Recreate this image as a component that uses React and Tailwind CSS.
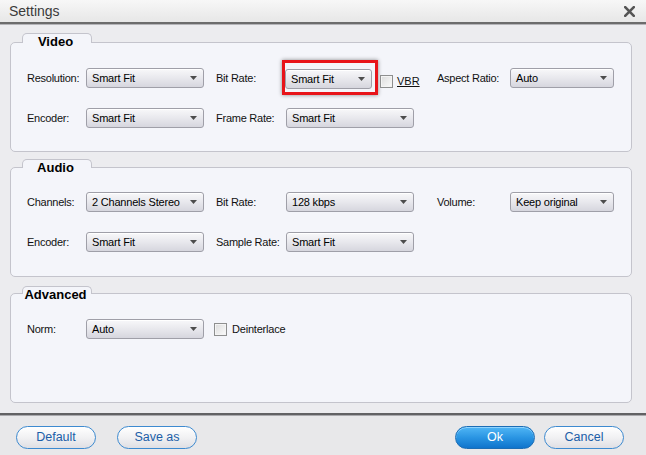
import React from "react";

const FONT = "font-['Liberation_Sans',Arial,sans-serif]";

function Select({ w, value }) {
  return (
    <div
      className={`${w} h-[20px] shrink-0 rounded-[3px] border border-[#9f9fa8] bg-linear-to-b from-[#f8f8fa] via-[#e8e8ed] to-[#d6d6de] flex items-center justify-between pl-[5px] pr-[6px] text-[11px] text-black shadow-[inset_0_1px_0_#ffffff]`}
    >
      <span className="leading-none tracking-[-0.2px]">{value}</span>
      <svg width="7" height="4" viewBox="0 0 7 4">
        <path d="M0 0H7L3.5 4Z" fill="#4d4d4d" />
      </svg>
    </div>
  );
}

function Check() {
  return (
    <div className="w-[13px] h-[13px] shrink-0 border border-[#8e8f8f] bg-linear-to-br from-[#dcdcdc] to-[#fbfbfb] shadow-[inset_0_0_0_1px_#f4f4f4]" />
  );
}

function Label({ w, children }) {
  return (
    <div className={`${w} shrink-0 text-[11px] leading-none tracking-[-0.25px] text-[#111]`}>
      {children}
    </div>
  );
}

function Group({ title, tabH, children, boxClass }) {
  return (
    <div className="flex flex-col ml-[10px] w-[622px]">
      <div
        className={`relative z-10 ml-[12px] w-[70px] ${tabH} -mb-px rounded-t-[5px] border border-b-0 border-[#c4c4cc] bg-[#f4f5fa] flex justify-center`}
      >
        <span className="leading-[15px] text-[13px] font-bold text-black whitespace-nowrap -ml-[3px]">
          {title}
        </span>
      </div>
      <div className={`rounded-[5px] border border-[#c4c4cc] bg-[#f4f5fa] pl-[16px] flex flex-col ${boxClass}`}>
        {children}
      </div>
    </div>
  );
}

function Row({ children }) {
  return <div className="flex items-center h-[20px]">{children}</div>;
}

function Btn({ children, primary }) {
  return primary ? (
    <div className="w-[80px] h-[23px] rounded-full border border-[#1c6db5] bg-linear-to-b from-[#4fb6f5] via-[#2a95e3] to-[#0f74cc] flex items-center justify-center text-white text-[12.5px] shadow-[inset_0_1px_0_#8fd3ff]">
      {children}
    </div>
  ) : (
    <div className="w-[80px] h-[23px] rounded-full border border-[#3d8ad0] bg-linear-to-b from-[#ffffff] via-[#f1f1f3] to-[#dfdfe4] flex items-center justify-center text-[#1b5ea8] text-[12.5px]">
      {children}
    </div>
  );
}

export default function App() {
  return (
    <div className={`${FONT} w-[646px] h-[455px] bg-[#ececef] flex flex-col overflow-hidden`}>
      {/* title bar */}
      <div className="h-[22px] shrink-0 bg-linear-to-b from-[#f7f7f7] to-[#e7e7e7] flex items-center justify-between pl-[9px] pr-[11px]">
        <span className="text-[14px] text-[#3a3a3a] leading-none">Settings</span>
        <svg width="11" height="11" viewBox="0 0 11 11">
          <path d="M1.2 1.2L9.8 9.8M9.8 1.2L1.2 9.8" stroke="#555" strokeWidth="2.6" strokeLinecap="square" />
        </svg>
      </div>
      <div className="h-[2px] shrink-0 bg-[#6c6c6c]" />
      <div className="h-[1px] shrink-0 bg-[#b4b4b8]" />

      <div className="flex flex-col pt-[8px]">
        <Group title="Video" tabH="h-[10px]" boxClass="pt-[25px] pb-[23px] gap-[20px]">
          <Row>
            <Label w="w-[59px]">Resolution:</Label>
            <Select w="w-[118px]" value="Smart Fit" />
            <div className="w-[12px] shrink-0" />
            <Label w="w-[66px]">Bit Rate:</Label>
            <div className="w-[155px] shrink-0 flex items-center self-start">
              <div className="-mt-[8px] border-[3px] border-[#e8141a] pt-[6px] pb-[3px] pr-[3px] shadow-[0_0_4px_rgba(0,0,0,0.45)]">
                <Select w="w-[87px]" value="Smart Fit" />
              </div>
              <div className="ml-[2px] flex items-center gap-[4px]">
                <Check />
                <span className="text-[11px] leading-none underline text-[#111]">VBR</span>
              </div>
            </div>
            <Label w="w-[73px]">Aspect Ratio:</Label>
            <Select w="w-[104px]" value="Auto" />
          </Row>
          <Row>
            <Label w="w-[59px]">Encoder:</Label>
            <Select w="w-[118px]" value="Smart Fit" />
            <div className="w-[12px] shrink-0" />
            <Label w="w-[70px]">Frame Rate:</Label>
            <Select w="w-[128px]" value="Smart Fit" />
          </Row>
        </Group>

        <div className="h-[7px]" />
        <Group title="Audio" tabH="h-[9px]" boxClass="pt-[24px] pb-[24px] gap-[20px]">
          <Row>
            <Label w="w-[59px]">Channels:</Label>
            <Select w="w-[118px]" value="2 Channels Stereo" />
            <div className="w-[12px] shrink-0" />
            <Label w="w-[70px]">Bit Rate:</Label>
            <Select w="w-[128px]" value="128 kbps" />
            <div className="w-[23px] shrink-0" />
            <Label w="w-[73px]">Volume:</Label>
            <Select w="w-[104px]" value="Keep original" />
          </Row>
          <Row>
            <Label w="w-[59px]">Encoder:</Label>
            <Select w="w-[118px]" value="Smart Fit" />
            <div className="w-[12px] shrink-0" />
            <Label w="w-[70px]">Sample Rate:</Label>
            <Select w="w-[128px]" value="Smart Fit" />
          </Row>
        </Group>

        <div className="h-[9px]" />
        <Group title="Advanced" tabH="h-[8px]" boxClass="pt-[25px] pb-[63px]">
          <Row>
            <Label w="w-[59px]">Norm:</Label>
            <Select w="w-[118px]" value="Auto" />
            <div className="w-[10px] shrink-0" />
            <Check />
            <span className="ml-[5px] text-[11px] leading-none tracking-[-0.2px] text-[#111]">Deinterlace</span>
          </Row>
        </Group>
      </div>

      <div className="flex-1" />
      <div className="h-[2px] shrink-0 bg-[#626264]" />
      <div className="h-[1px] shrink-0 bg-[#a9a9ad]" />
      <div className="h-[39px] shrink-0 bg-[#e8e8ea] flex items-start pt-[10px] pl-[16px] pr-[22px]">
        <Btn>Default</Btn>
        <div className="w-[21px]" />
        <Btn>Save as</Btn>
        <div className="flex-1" />
        <Btn primary>Ok</Btn>
        <div className="w-[9px]" />
        <Btn>Cancel</Btn>
      </div>
    </div>
  );
}
